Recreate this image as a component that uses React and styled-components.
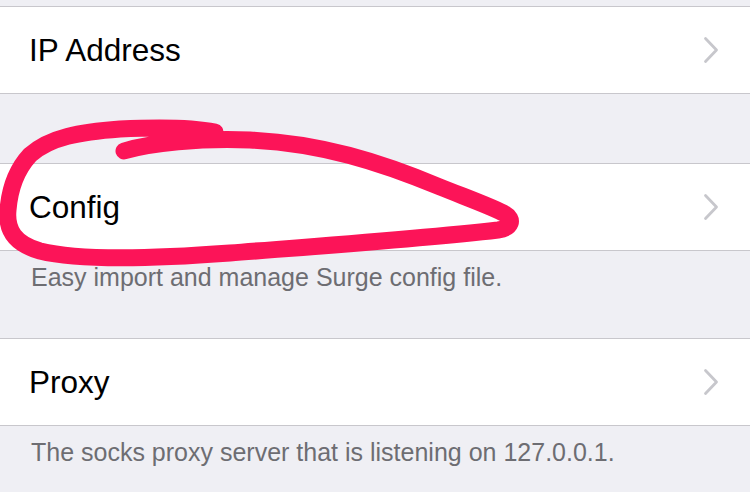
import React from "react";
import styled, { createGlobalStyle } from "styled-components";

const Global = createGlobalStyle`
  html, body { margin: 0; padding: 0; background: #efeff4; }
  body { font-family: "Liberation Sans", Arial, sans-serif; }
`;

const Page = styled.div`
  position: relative;
  width: 750px;
  height: 492px;
  overflow: hidden;
  background: #efeff4;
  display: flex;
  flex-direction: column;
`;

const Gap = styled.div`
  height: ${(p) => p.$h}px;
  flex: none;
`;

const Group = styled.div`
  background: #ffffff;
  border-top: 1px solid #c8c7cc;
  border-bottom: 1px solid #c8c7cc;
  flex: none;
`;

const Cell = styled.div`
  height: 86px;
  display: flex;
  align-items: center;
  justify-content: space-between;
  padding: 0 30px 0 29px;
`;

const Label = styled.span`
  font-size: 31.5px;
  line-height: 32px;
  color: #000;
`;

const Footer = styled.div`
  flex: none;
  padding: 11px 31px 0 31px;
  height: ${(p) => p.$h}px;
  box-sizing: border-box;
  font-size: 25px;
  line-height: 30px;
  color: #6d6d72;
`;

const Overlay = styled.svg`
  position: absolute;
  left: 0;
  top: 0;
  pointer-events: none;
`;

const Chevron = () => (
  <svg width="18" height="28" viewBox="0 0 18 28">
    <path
      d="M3.5 2.5 L14.5 14 L3.5 25.5"
      fill="none"
      stroke="#c7c7cc"
      strokeWidth="2.8"
      strokeLinecap="round"
      strokeLinejoin="round"
    />
  </svg>
);

const Row = ({ label }) => (
  <Group>
    <Cell>
      <Label>{label}</Label>
      <Chevron />
    </Cell>
  </Group>
);

export default function App() {
  return (
    <>
      <Global />
      <Page>
        <Gap $h={6} />
        <Row label="IP Address" />
        <Gap $h={69} />
        <Row label="Config" />
        <Footer $h={87}>Easy import and manage Surge config file.</Footer>
        <Row label="Proxy" />
        <Footer $h={70}>The socks proxy server that is listening on 127.0.0.1.</Footer>
        <Overlay width="750" height="492" viewBox="0 0 750 492">
          <path
            d="M124 151 C150 143, 200 138, 250 140 C320 143, 380 162, 440 187 C470 199, 495 208, 505 214 C514 219, 512 228, 498 230 C420 239, 320 246, 230 253 C150 259, 80 261, 40 251 C15 244, 6 230, 8 210 C10 185, 18 168, 30 155 C50 137, 80 132, 120 129 C160 127, 195 128, 215 132"
            fill="none"
            stroke="#fc1458"
            strokeWidth="17"
            strokeLinecap="round"
            strokeLinejoin="round"
          />
        </Overlay>
      </Page>
    </>
  );
}
